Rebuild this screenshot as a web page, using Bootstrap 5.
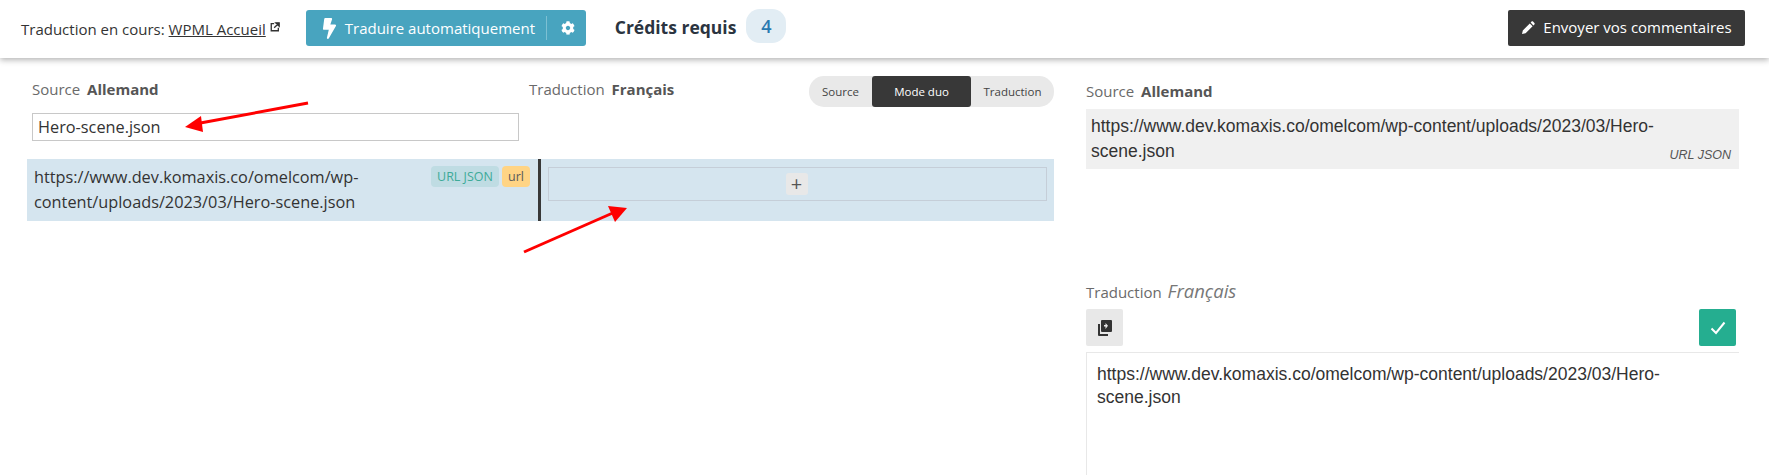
<!DOCTYPE html>
<html lang="fr">
<head>
  <meta charset="UTF-8">
  <title>Traduction en cours</title>
  <link href="https://cdn.jsdelivr.net/npm/bootstrap@5.3.0/dist/css/bootstrap.min.css" rel="stylesheet">
  <style>
    body { font-family: "Open Sans", sans-serif; color: #333; height: 475px; overflow: hidden; background: #fff; }
    .top-bar { height: 58px; padding: 0 24px 0 21px; box-shadow: 0 2px 6px rgba(0,0,0,.3); font-size: 15px; position: relative; white-space: nowrap; }
    .top-bar a { color: #333; }
    .ext-icon { width: 10px; height: 10px; margin: 0 0 5px 4px; }
    .auto-btn { width: 280px; height: 36px; margin-left: 26px; margin-top: -2px; background: #48a4bf; color: #fff; border-radius: 3px; font-size: 15px; padding: 0 13px 0 16px; flex: none; }
    .auto-btn .sep { width: 1px; height: 24px; background: #7dc0d3; margin: 0 14px 0 11px; flex: none; }
    .credit-title { margin-left: 29px; font-size: 17.5px; font-weight: 700; color: #2b3440; margin-top: -4px; }
    .credit-pill { width: 40px; height: 34px; margin-left: 10px; margin-top: -6px; border-radius: 14px; background: #e2edf4; color: #2a7ab0; font-size: 18px; font-weight: 600; }
    .send-btn { width: 237px; height: 36px; margin-top: -3px; background: #383838; color: #fff; border-radius: 2px; font-size: 15px; }
    .left-side { width: 1054px; padding: 21px 0 0 27px; flex: none; }
    .lang-label { font-size: 15px; color: #6a6a6a; line-height: 20px; }
    .lang-label b { color: #555; margin-left: 3px; }
    .src-head { width: 502px; }
    .src-head .lang-label { padding-left: 5px; }
    .search-box { display: block; width: 487px; height: 28px; margin: 14px 0 0 5px; border: 1px solid #c8c8c8; padding: 0 5px; font-size: 16.3px; color: #333; line-height: 26px; outline: 0; font-family: inherit; }
    .mode-switch { width: 245px; height: 31px; background: #e9e9e9; border-radius: 15px; margin-top: -3px; font-size: 11.5px; color: #444; }
    .mode-switch span { height: 31px; }
    .mode-switch .m-src { width: 63px; }
    .mode-switch .m-duo { width: 99px; background: #383838; color: #fff; border-radius: 3px; }
    .mode-switch .m-tr { width: 83px; }
    .string-row { height: 62px; margin-top: 18px; background: #d5e5ef; }
    .src-cell { width: 511px; padding: 6px 8px 0 7px; font-size: 16.3px; line-height: 25px; flex: none; }
    .src-cell .txt { width: 340px; }
    .tag-teal, .tag-gold { height: 21px; margin-top: 1px; border-radius: 4px; font-size: 12.5px; line-height: 21px; text-align: center; }
    .tag-teal { width: 68px; background: #bfdce3; color: #3eaa98; margin-right: 3px; }
    .tag-gold { width: 28px; background: #ffd484; color: #5a5a5a; }
    .bar-split { width: 3px; background: #383838; flex: none; }
    .tr-cell { flex: 1; padding: 8px 7px 0 7px; }
    .add-box { height: 34px; border: 1px solid #c5ced8; }
    .add-btn { width: 22px; height: 22px; margin-left: -2px; background: #e8e8e8; border-radius: 3px; color: #555; font-size: 20px; line-height: 1; }
    .right-side { width: 653px; margin-left: 32px; padding-top: 23px; flex: none; }
    .arial { font-family: "Liberation Sans", sans-serif; }
    .src-box { height: 60px; margin-top: 8px; background: #f0f0f0; padding: 5px; font-size: 17.5px; line-height: 25px; position: relative; color: #333; }
    .src-box .hint { position: absolute; right: 8px; bottom: 4px; font-size: 12.5px; font-style: italic; color: #555; line-height: 20px; }
    .tr-head { margin-top: 112px; }
    .tr-head i { font-size: 18.5px; color: #777; margin-left: 2px; }
    .icon-tile { width: 37px; height: 37px; border-radius: 2px; }
    .tile-grey { background: #e8e8e8; }
    .tile-green { background: #25ae90; margin-right: 3px; }
    .tr-tools { margin-top: 7px; }
    .tr-text { margin-top: 6px; height: 200px; border-top: 1px solid #e8e8e8; border-left: 1px solid #e8e8e8; padding: 10px 10px; font-size: 17.5px; line-height: 23px; color: #333; }
    .tr-text div { width: 590px; }
    .arrows { position: absolute; left: 0; top: 0; pointer-events: none; }
  </style>
</head>
<body>

<!-- Barre du haut -->
<div class="top-bar d-flex align-items-center">
  <span>Traduction en cours: <a href="#">WPML Accueil</a></span>
  <svg class="ext-icon" viewBox="0 0 12 12"><path d="M5 2H1.5v8.5H10V7" fill="none" stroke="#333" stroke-width="1.6"/><path d="M7 1h4v4z M10 2 5 7" fill="#333" stroke="#333" stroke-width="1.6"/></svg>
  <div class="auto-btn d-flex align-items-center">
    <svg width="15" height="21" viewBox="0 0 320 512" class="flex-shrink-0" fill="#fff"><path d="M296 160H180.6l42.6-129.8C227.2 15 215.7 0 200 0H56C44 0 33.8 8.9 32.2 20.8l-32 240C-1.7 275.2 9.5 288 24 288h118.7L96.6 482.5c-3.6 15.2 8 29.5 23.3 29.5 8.4 0 16.4-4.4 20.8-12l176-304c9.3-15.9-2.2-36-20.7-36z"/></svg>
    <span class="ms-2">Traduire automatiquement</span>
    <span class="sep"></span>
    <svg width="14" height="14" viewBox="0 0 512 512" class="flex-shrink-0" fill="#fff"><path d="M487.4 315.7l-42.6-24.6c4.3-23.2 4.3-47 0-70.2l42.6-24.6c4.9-2.8 7.1-8.6 5.5-14-11.1-35.6-30-67.8-54.7-94.6-3.8-4.1-10-5.1-14.8-2.3L380.8 110c-17.9-15.4-38.5-27.3-60.8-35.1V25.8c0-5.6-3.9-10.5-9.4-11.7-36.7-8.2-74.3-7.8-109.2 0-5.5 1.2-9.4 6.1-9.4 11.7V75c-22.2 7.9-42.8 19.8-60.8 35.1L88.7 85.5c-4.9-2.8-11-1.9-14.8 2.3-24.7 26.7-43.6 58.9-54.7 94.6-1.7 5.4.6 11.2 5.5 14L67.3 221c-4.3 23.2-4.3 47 0 70.2l-42.6 24.6c-4.9 2.8-7.1 8.6-5.5 14 11.1 35.6 30 67.8 54.7 94.6 3.8 4.1 10 5.1 14.8 2.3l42.6-24.6c17.9 15.4 38.5 27.3 60.8 35.1v49.2c0 5.6 3.9 10.5 9.4 11.7 36.7 8.2 74.3 7.8 109.2 0 5.5-1.2 9.4-6.1 9.4-11.7v-49.2c22.2-7.9 42.8-19.8 60.8-35.1l42.6 24.6c4.9 2.8 11 1.9 14.8-2.3 24.7-26.7 43.6-58.9 54.7-94.6 1.5-5.5-.7-11.3-5.6-14.1zM256 336c-44.1 0-80-35.9-80-80s35.9-80 80-80 80 35.9 80 80-35.9 80-80 80z"/></svg>
  </div>
  <span class="credit-title">Crédits requis</span>
  <span class="credit-pill d-flex align-items-center justify-content-center">4</span>
  <div class="send-btn d-flex align-items-center justify-content-center gap-2 ms-auto">
    <svg width="14" height="14" viewBox="0 0 14 14" fill="#fff"><path d="M1 13l.8-3.6 7-7 2.8 2.8-7 7z M9.6 1.6l1-1c.4-.4 1-.4 1.4 0l1.4 1.4c.4.4.4 1 0 1.4l-1 1z"/></svg>
    <span>Envoyer vos commentaires</span>
  </div>
</div>

<div class="d-flex">
  <!-- Colonne de gauche -->
  <div class="left-side">
    <div class="d-flex">
      <div class="src-head flex-shrink-0">
        <div class="lang-label">Source <b>Allemand</b></div>
        <input class="search-box" type="text" value="Hero-scene.json">
      </div>
      <div class="d-flex flex-grow-1 justify-content-between">
        <div class="lang-label">Traduction <b>Français</b></div>
        <div class="mode-switch d-flex">
          <span class="m-src d-flex align-items-center justify-content-center">Source</span>
          <span class="m-duo d-flex align-items-center justify-content-center">Mode duo</span>
          <span class="m-tr d-flex align-items-center justify-content-center">Traduction</span>
        </div>
      </div>
    </div>
    <div class="string-row d-flex">
      <div class="src-cell d-flex justify-content-between">
        <div class="txt">https://www.dev.komaxis.co/omelcom/wp-content/uploads/2023/03/Hero-scene.json</div>
        <div class="d-flex align-items-start">
          <span class="tag-teal">URL JSON</span>
          <span class="tag-gold">url</span>
        </div>
      </div>
      <div class="bar-split"></div>
      <div class="tr-cell">
        <div class="add-box d-flex align-items-center justify-content-center">
          <span class="add-btn d-flex align-items-center justify-content-center">+</span>
        </div>
      </div>
    </div>
  </div>

  <!-- Colonne de droite -->
  <div class="right-side">
    <div class="lang-label">Source <b>Allemand</b></div>
    <div class="src-box arial">
      <div>https://www.dev.komaxis.co/omelcom/wp-content/uploads/2023/03/Hero-<br>scene.json</div>
      <span class="hint">URL JSON</span>
    </div>
    <div class="lang-label tr-head">Traduction <i>Français</i></div>
    <div class="tr-tools d-flex justify-content-between">
      <div class="icon-tile tile-grey d-flex align-items-center justify-content-center">
        <svg width="16" height="18" viewBox="0 0 16 18" fill="#333"><path d="M1 5h2v10h8v2H2a1 1 0 0 1-1-1z"/><path fill-rule="evenodd" d="M5 1h9a1 1 0 0 1 1 1v10a1 1 0 0 1-1 1H5a1 1 0 0 1-1-1V2a1 1 0 0 1 1-1zm3.5 3v2H7v1.6h1.5V10L11 6.8 8.5 4z"/></svg>
      </div>
      <div class="icon-tile tile-green d-flex align-items-center justify-content-center">
        <svg width="16" height="14" viewBox="0 0 16 14" fill="none" stroke="#fff" stroke-width="2"><path d="M1.5 7.5 6 12 14.5 1.5"/></svg>
      </div>
    </div>
    <div class="tr-text arial"><div>https://www.dev.komaxis.co/omelcom/wp-content/uploads/2023/03/Hero-scene.json</div></div>
  </div>
</div>

<!-- Fleches rouges posees sur la capture -->
<svg class="arrows" width="1769" height="475" fill="#f00" stroke="none">
  <path d="M308 103 195 124" stroke="#f00" stroke-width="3"/>
  <path d="M185 127 201 116 203 132z"/>
  <path d="M524 252 615 212" stroke="#f00" stroke-width="3"/>
  <path d="M627 208 608 206 615 222z"/>
</svg>

<script src="https://cdn.jsdelivr.net/npm/bootstrap@5.3.0/dist/js/bootstrap.bundle.min.js"></script>
</body>
</html>
